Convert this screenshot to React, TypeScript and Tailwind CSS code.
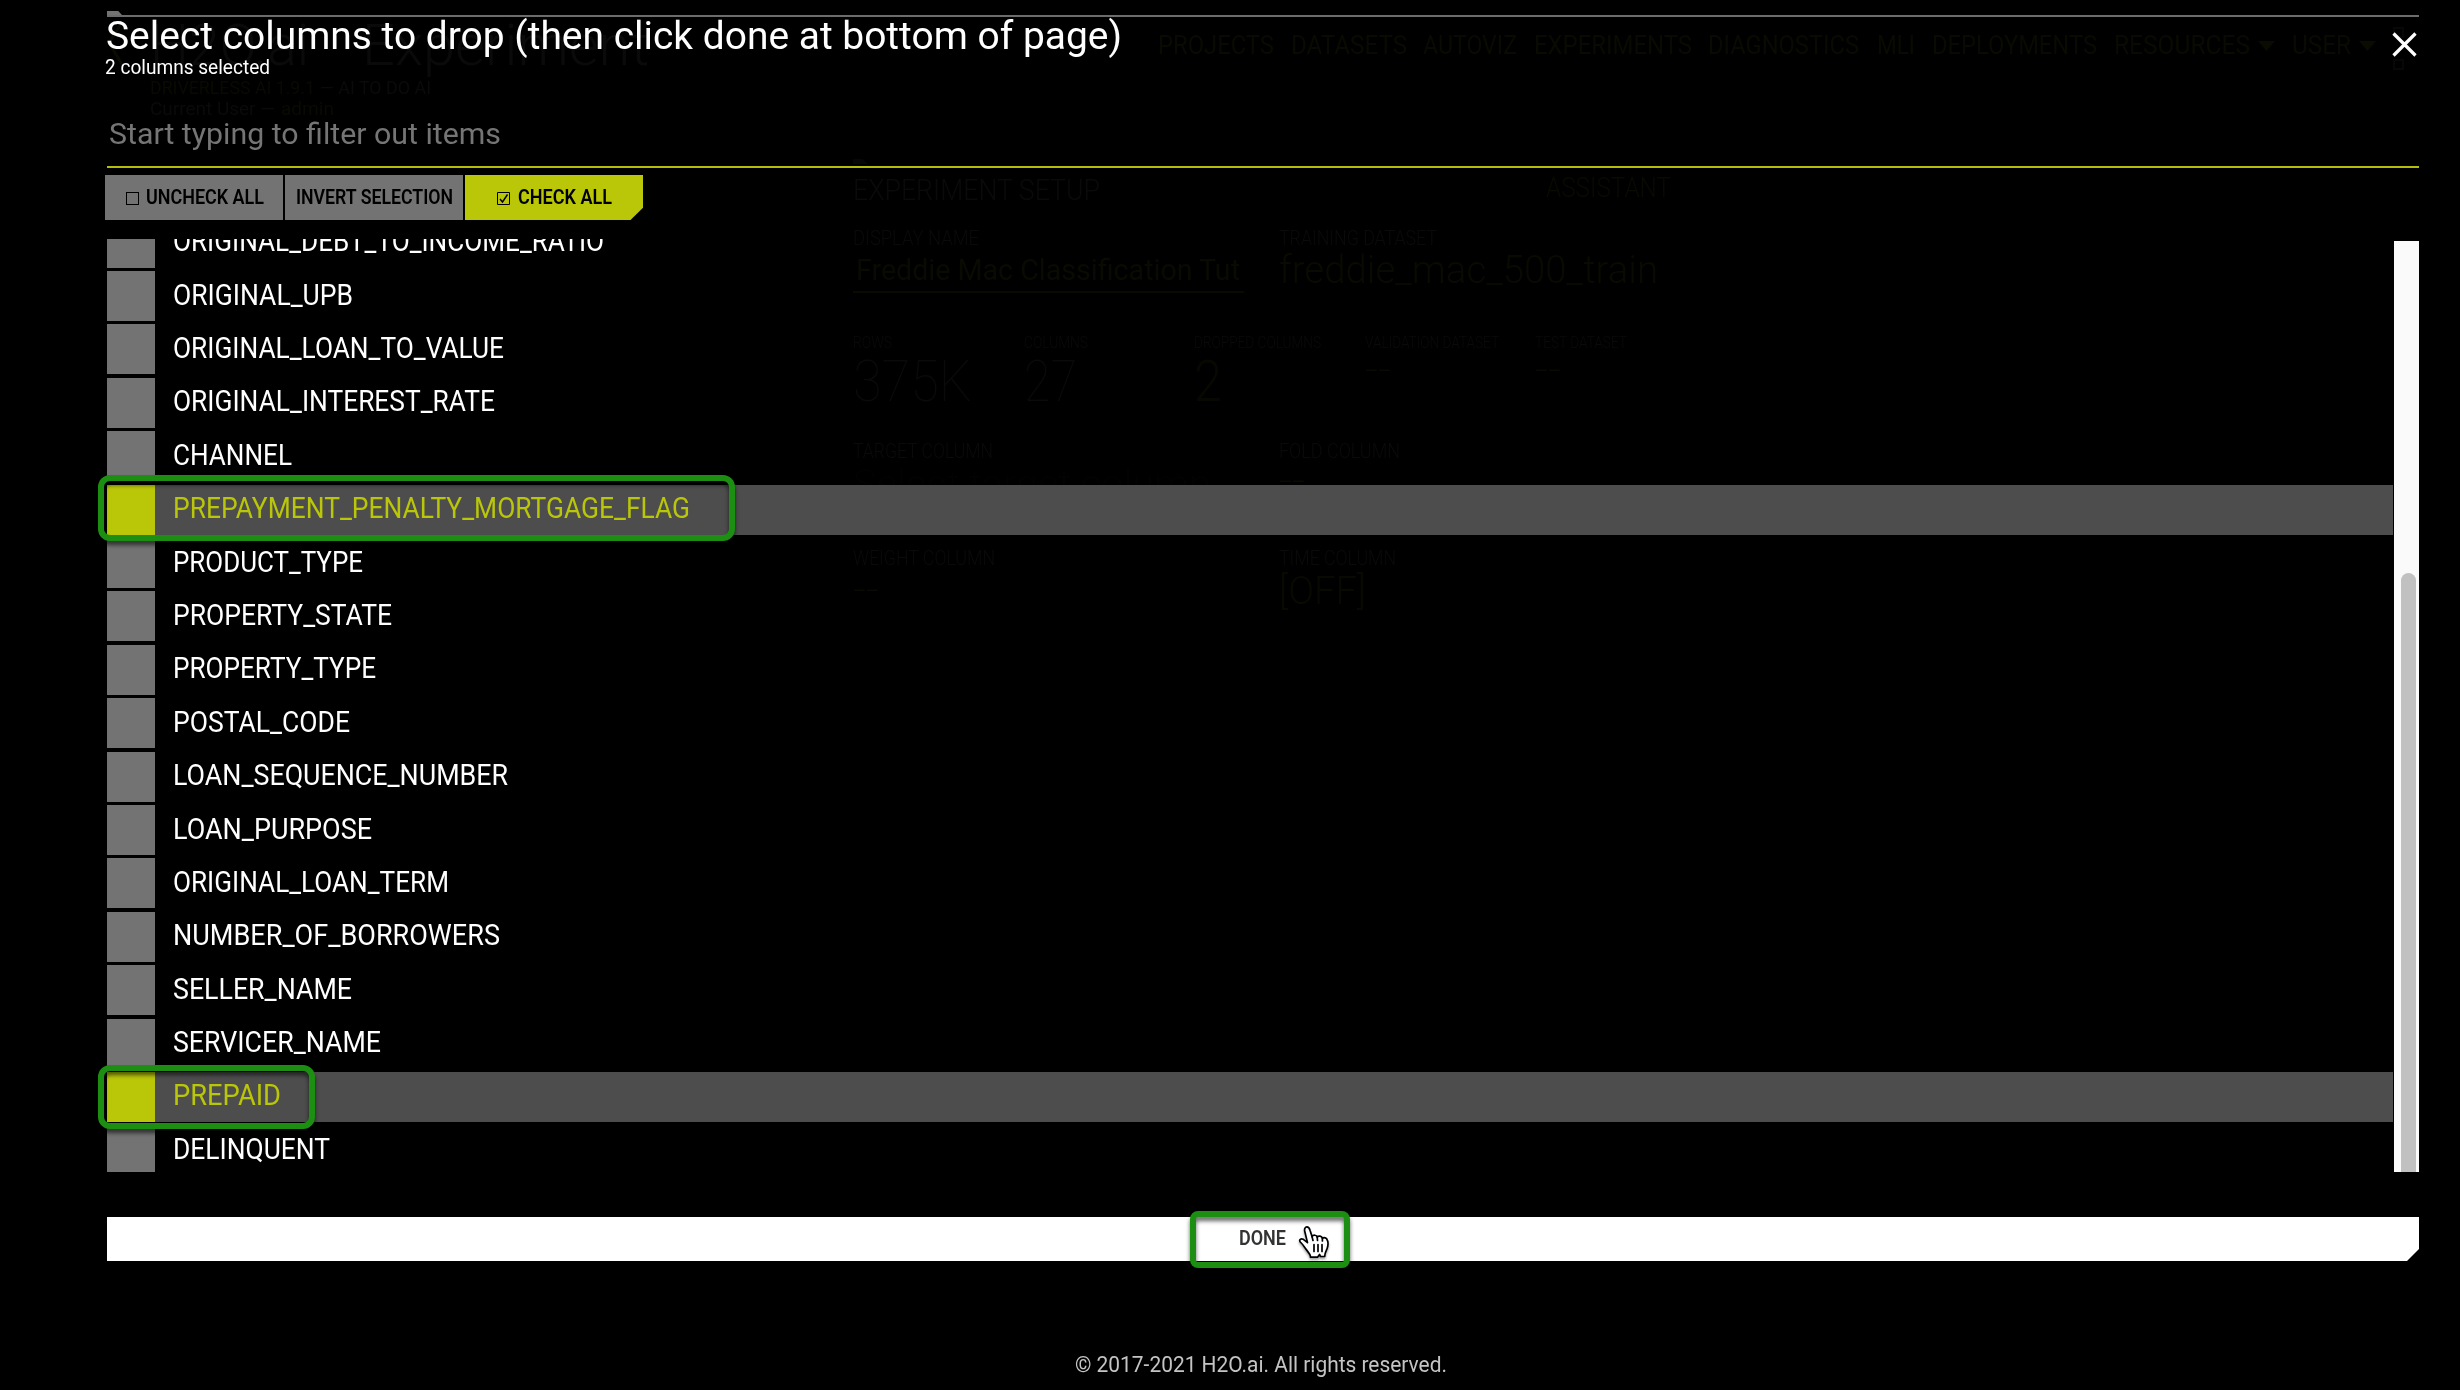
import { useLayoutEffect, useRef } from "react";
import type { ReactNode } from "react";

/** One line of text, condensed or widened to fill the width of its box. */
function Fit({ className, children }: { className: string; children: ReactNode }) {
  const box = useRef<HTMLDivElement>(null);
  const text = useRef<HTMLSpanElement>(null);
  useLayoutEffect(() => {
    const b = box.current;
    const t = text.current;
    if (b && t && t.offsetWidth > 0) {
      t.style.transform = `scaleX(${b.clientWidth / t.getBoundingClientRect().width})`;
    }
  }, []);
  return (
    <div ref={box} className={`shrink-0 whitespace-nowrap leading-none ${className}`}>
      <span ref={text} className="inline-block origin-left leading-none">
        {children}
      </span>
    </div>
  );
}

const columns = [
  { name: "ORIGINAL_DEBT_TO_INCOME_RATIO", width: "w-[431px]" },
  { name: "ORIGINAL_UPB", width: "w-[180px]" },
  { name: "ORIGINAL_LOAN_TO_VALUE", width: "w-[331px]" },
  { name: "ORIGINAL_INTEREST_RATE", width: "w-[322px]" },
  { name: "CHANNEL", width: "w-[119px]" },
  { name: "PREPAYMENT_PENALTY_MORTGAGE_FLAG", width: "w-[517px]", mark: "w-[637px] top-[-10px] h-[66px]" },
  { name: "PRODUCT_TYPE", width: "w-[190px]" },
  { name: "PROPERTY_STATE", width: "w-[219px]" },
  { name: "PROPERTY_TYPE", width: "w-[203px]" },
  { name: "POSTAL_CODE", width: "w-[177px]" },
  { name: "LOAN_SEQUENCE_NUMBER", width: "w-[335px]" },
  { name: "LOAN_PURPOSE", width: "w-[199px]" },
  { name: "ORIGINAL_LOAN_TERM", width: "w-[276px]" },
  { name: "NUMBER_OF_BORROWERS", width: "w-[327px]" },
  { name: "SELLER_NAME", width: "w-[179px]" },
  { name: "SERVICER_NAME", width: "w-[208px]" },
  { name: "PREPAID", width: "w-[108px]", mark: "w-[217px] top-[-7px] h-[64px]" },
  { name: "DELINQUENT", width: "w-[157px]" },
];

const navItems = [
  { name: "PROJECTS", width: "w-[116px] mr-[17px]" },
  { name: "DATASETS", width: "w-[116px] mr-[16px]" },
  { name: "AUTOVIZ", width: "w-[94px] mr-[17px]" },
  { name: "EXPERIMENTS", width: "w-[158px] mr-[16px]" },
  { name: "DIAGNOSTICS", width: "w-[151px] mr-[18px]" },
  { name: "MLI", width: "w-[38px] mr-[17px]" },
  { name: "DEPLOYMENTS", width: "w-[165px] mr-[17px]" },
  { name: "RESOURCES", width: "w-[136px] mr-[8px]", menu: true },
  { name: "USER", width: "w-[59px] mr-[8px]", menu: true },
];

function Caret() {
  return <span className="mr-[17px] mt-[9px] h-[10px] w-[17px] bg-[#0a0b01] [clip-path:polygon(0_0,100%_0,50%_100%)]" />;
}

function ExperimentPage() {
  return (
    <div className="h-[1390px] overflow-hidden pl-[107px] text-[#0a0a0a]">
      <header className="flex h-[159px] pt-[16px]">
        <svg className="h-[56px] w-[43px]" viewBox="0 0 43 56" fill="none" stroke="#0a0b01" strokeWidth="3">
          <path d="M14 8 2 27l14 23" />
        </svg>
        <div className="w-[1008px]">
          <div className="flex gap-[53px] text-[58px] font-light">
            <Fit className="w-[159px]">H2O.ai</Fit>
            <Fit className="w-[287px]">Experiment</Fit>
          </div>
          <div className="mt-[4px] flex gap-[5px]">
            <Fit className="w-[165px] text-[19px] text-[#090a01]">DRIVERLESS AI 1.9.1</Fit>
            <Fit className="w-[111px] text-[19px]">— AI TO DO AI</Fit>
          </div>
          <div className="mt-[2px] flex gap-[6px]">
            <Fit className="w-[125px] text-[19px]">Current User —</Fit>
            <Fit className="w-[53px] text-[19px] text-[#090a01]">admin</Fit>
          </div>
        </div>
        <nav className="flex pt-[16px] text-[26px] text-[#090a01]">
          {navItems.map((item) => (
            <div key={item.name} className="flex">
              <Fit className={item.width}>{item.name}</Fit>
              {item.menu && <Caret />}
            </div>
          ))}
          <div className="-mt-[5px] flex flex-col gap-[21px]">
            <span className="h-[11px] w-[11px] border-2 border-[#070707]" />
            <span className="h-[11px] w-[11px] border-2 border-[#070707]" />
          </div>
        </nav>
      </header>

      <main className="ml-[746px] font-light">
        <div className="h-[5px] w-[15px] bg-[#070707] [clip-path:polygon(0_0,65%_0,100%_100%,0_100%)]" />
        <div className="mt-[11px] flex h-[30px]">
          <Fit className="mr-[446px] w-[247px] text-[30px]">EXPERIMENT SETUP</Fit>
          <Fit className="w-[125px] text-[27px] text-[#090a01]">ASSISTANT</Fit>
        </div>
        <div className="mt-[23px] flex">
          <div className="w-[426px]">
            <Fit className="w-[126px] text-[20px]">DISPLAY NAME</Fit>
            <div className="mt-[8px] h-[37px] w-[391px] border-b-2 border-[#090a01] pl-[3px] text-[#090a01]">
              <Fit className="w-[384px] text-[29.5px] font-normal">Freddie Mac Classification Tut</Fit>
            </div>
          </div>
          <div>
            <Fit className="w-[158px] text-[20px]">TRAINING DATASET</Fit>
            <Fit className="mt-[3px] w-[379px] text-[39px] text-[#090a01]">freddie_mac_500_train</Fit>
          </div>
        </div>
        <div className="mt-[42px] grid grid-cols-[171px_170px_171px_170px_170px] text-[16px]">
          <div>
            <Fit className="w-[39px]">ROWS</Fit>
            <Fit className="mt-px w-[119px] text-[58px] font-thin">375K</Fit>
          </div>
          <div>
            <Fit className="w-[64px]">COLUMNS</Fit>
            <Fit className="mt-px w-[53px] text-[58px] font-thin">27</Fit>
          </div>
          <div>
            <Fit className="w-[127px]">DROPPED COLUMNS</Fit>
            <Fit className="mt-px w-[28px] text-[58px] text-[#070801]">2</Fit>
          </div>
          <div>
            <Fit className="w-[134px]">VALIDATION DATASET</Fit>
            <Fit className="mt-[2px] w-[26px] text-[32px] text-[#090a01]">--</Fit>
          </div>
          <div>
            <Fit className="w-[92px]">TEST DATASET</Fit>
            <Fit className="mt-[2px] w-[26px] text-[32px] text-[#090a01]">--</Fit>
          </div>
        </div>
        <div className="mt-[31px] flex h-[107px]">
          <div className="w-[426px]">
            <Fit className="w-[140px] text-[20px]">TARGET COLUMN</Fit>
            <Fit className="mt-[4px] w-[358px] text-[39px] text-[#020202]">Select target column</Fit>
          </div>
          <div>
            <Fit className="w-[121px] text-[20px]">FOLD COLUMN</Fit>
            <Fit className="mt-[3px] w-[26px] text-[32px] text-[#090a01]">--</Fit>
          </div>
        </div>
        <div className="flex">
          <div className="w-[426px]">
            <Fit className="w-[142px] text-[20px]">WEIGHT COLUMN</Fit>
            <Fit className="mt-[5px] w-[26px] text-[32px] text-[#090a01]">--</Fit>
          </div>
          <div>
            <Fit className="w-[117px] text-[20px]">TIME COLUMN</Fit>
            <Fit className="mt-[4px] w-[87px] text-[38px] text-[#080901]">[OFF]</Fit>
          </div>
        </div>
      </main>
    </div>
  );
}

function Highlight({ className }: { className: string }) {
  return (
    <span
      className={`pointer-events-none absolute z-10 border-[6px] border-[#1c8e12] drop-shadow-[0_4px_2px_rgba(0,0,0,0.6)] ${className}`}
    />
  );
}

function HandCursor() {
  return (
    <svg
      className="absolute left-[108px] top-[14px] h-[35px] w-[33px] drop-shadow-[0_2px_1px_rgba(0,0,0,0.35)]"
      viewBox="0 0 33 35"
      fill="#fff"
      stroke="#000"
      strokeWidth="1.7"
      strokeLinejoin="round"
      strokeLinecap="round"
    >
      <path d="M12.5 31.500C12 28.500 9.500 26.500 7.500 23.500C6 21.200 5 19.500 2.300 17C.7 14.800 3 12.900 5.300 14.300L9.500 17.600L6.800 6.500C6 3.500 7.500 1.900 8.800 1.900C10.500 1.900 11.400 3 12 5.200L14 11.600C15 9.600 18.800 9.800 19.200 12C20.500 10.400 23.800 10.800 24.400 13.200C26 12 28.800 12.800 29.200 15C30.700 17.500 30 20.500 29.300 23C28.600 25.500 26.800 27 26.700 31.500H22.500L21.500 29.500L19.500 32.200H12.500Z" />
      <path d="M16 19.500V26.500M20 19.500V26.500M24 19.500V26.500M14 11.600L15 15.500M19.200 12L19.500 15.500M24.400 13.200V16" fill="none" />
    </svg>
  );
}

function ColumnDialog() {
  return (
    <div className="absolute inset-0 flex flex-col pl-[107px] pr-[41px] pt-[11px] text-white">
      <div className="h-[4px] w-[15px] shrink-0 bg-[#737373] [clip-path:polygon(0_0,75%_0,100%_100%,0_100%)]" />
      <div className="h-[2px] shrink-0 bg-[#6d6b6d]" />
      <div className="flex h-[149px] shrink-0 justify-between">
        <div>
          <Fit className="-ml-px -mt-px w-[1016px] text-[39.500px]">
            Select columns to drop (then click done at bottom of page)
          </Fit>
          <Fit className="-ml-[2px] mt-[2px] w-[165px] text-[19.500px]">2 columns selected</Fit>
          <Fit className="ml-[2px] mt-[43px] w-[392px] text-[29.500px] text-[#757575]">
            Start typing to filter out items
          </Fit>
        </div>
        <svg className="mr-[2px] mt-[15px] h-[25px] w-[25px]" viewBox="0 0 25 25" stroke="#fff" strokeWidth="3.200">
          <path d="M1.500 1.500 23.500 23.500M23.500 1.500 1.500 23.500" />
        </svg>
      </div>
      <div className="h-[2px] shrink-0 bg-[#b3bd0b]" />

      <div className="-ml-[2px] mt-[7px] flex h-[45px] shrink-0 gap-[2px] text-[19.500px] font-semibold text-black">
        <div className="flex w-[178px] items-center bg-[#737373] pl-[21px]">
          <span className="mr-[7px] mt-[2px] h-[13px] w-[13px] border border-black" />
          <Fit className="w-[118px]">UNCHECK ALL</Fit>
        </div>
        <div className="flex w-[178px] items-center justify-center bg-[#737373]">
          <Fit className="w-[157px]">INVERT SELECTION</Fit>
        </div>
        <div className="flex w-[178px] items-center bg-[#bac608] pl-[32px] [clip-path:polygon(0_0,100%_0,100%_73%,93%_100%,0_100%)]">
          <svg className="mr-[8px] mt-[2px] h-[13px] w-[13px]" viewBox="0 0 13 13" fill="none" stroke="#000">
            <path d="M.5.5H12.500V12.500H.5Z" />
            <path d="M3 7 5.500 10 10.500 2.500" strokeWidth="1.400" />
          </svg>
          <Fit className="w-[94px]">CHECK ALL</Fit>
        </div>
      </div>

      <div className="mt-[19px] flex h-[933px] shrink-0">
        <div className="h-[933px] w-[2286px] [clip-path:inset(0_0_0_-20px)]">
          <div className="-mt-[21.300px] flex flex-col gap-[3.400px]">
            {columns.map((column) => (
              <div
                key={column.name}
                className={
                  column.mark
                    ? "relative flex h-[50px] bg-[#4d4d4d] text-[#bac608]"
                    : "flex h-[50px]"
                }
              >
                <div className={column.mark ? "w-[48px] bg-[#bac608]" : "w-[48px] bg-[#737373]"} />
                <Fit className={`ml-[18px] mt-[9.500px] text-[29.500px] ${column.width}`}>{column.name}</Fit>
                {column.mark && <Highlight className={`-left-[9px] rounded-[12px] ${column.mark}`} />}
              </div>
            ))}
          </div>
        </div>
        <div className="ml-[1px] mt-[2px] w-[25px] bg-[#fafafa] pl-[7px] pt-[332px]">
          <div className="h-[599px] w-[15px] rounded-t-full bg-[#c1c1c1]" />
        </div>
      </div>

      <div className="relative mt-[45px] h-[44px] shrink-0">
        <div className="h-full bg-white pl-[1132px] pt-[12px] text-[#333] [clip-path:polygon(0_0,100%_0,100%_calc(100%-12px),calc(100%-12px)_100%,0_100%)]">
          <Fit className="w-[47px] text-[19.500px] font-semibold">DONE</Fit>
        </div>
        <div className="absolute left-[1083px] top-[-6px] h-[57px] w-[160px]">
          <Highlight className="inset-0 rounded-[8px]" />
          <div className="relative z-20">
            <HandCursor />
          </div>
        </div>
      </div>

      <footer className="mt-[92px] flex pl-[968px] text-[#c4c4c4]">
        <Fit className="w-[372px] text-[22.500px]">© 2017-2021 H2O.ai. All rights reserved.</Fit>
      </footer>
    </div>
  );
}

export default function App() {
  return (
    <div className="relative h-[1390px] w-[2460px] overflow-hidden bg-black font-['Roboto',sans-serif]">
      <ExperimentPage />
      <ColumnDialog />
    </div>
  );
}
